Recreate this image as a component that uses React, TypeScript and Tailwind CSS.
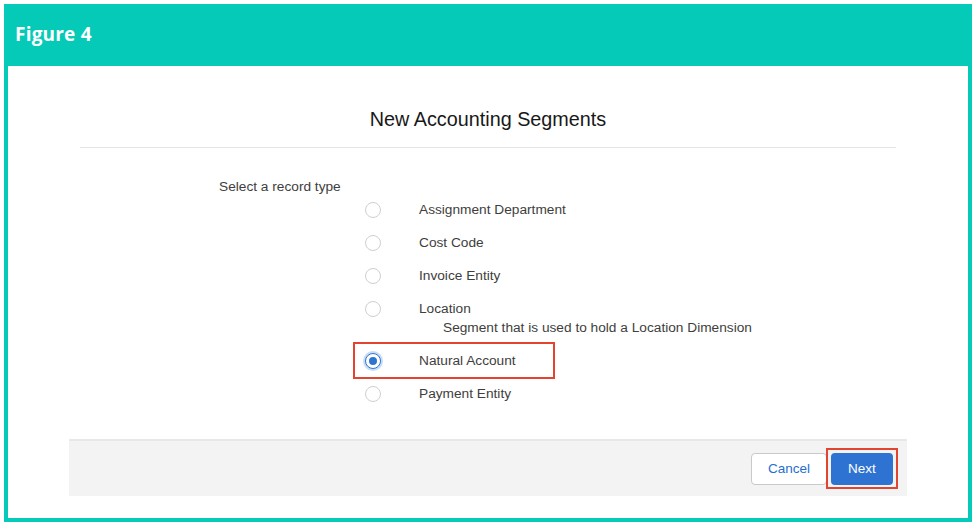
import React from "react";

const options = [
  { label: "Assignment Department" },
  { label: "Cost Code" },
  { label: "Invoice Entity" },
  { label: "Location", desc: "Segment that is used to hold a Location Dimension" },
  { label: "Natural Account", selected: true },
  { label: "Payment Entity" },
];

const sans = { fontFamily: '"Liberation Sans", Arial, sans-serif' };

export default function App() {
  return (
    <div className="w-[976px] h-[526px] bg-white p-[4px]">
      <div className="w-[968px] h-[518px] bg-[#04cab7] flex flex-col">
        <div className="h-[62px] flex items-center pl-[11px] pb-[2px]">
          <span
            className="text-white text-[19px] font-bold tracking-[0.2px]"
            style={{ fontFamily: '"Open Sans", sans-serif' }}
          >
            Figure 4
          </span>
        </div>
        <div className="flex-1 mx-[4px] mb-[4px] bg-white flex flex-col" style={sans}>
          <div className="pt-[41px] text-center text-[19.8px] leading-[24px] text-[#181818]">
            New Accounting Segments
          </div>
          <div className="mt-[16px] mx-[72px] h-px bg-[#e5e5e5]" />
          <div className="ml-[211px] mt-[30px] text-[13.7px] leading-[18px] text-[#3e3e3c]">
            <div>Select a record type</div>
            <div className="ml-[146px] mt-[5px] flex flex-col gap-[15px]">
              {options.map((o) => (
                <div key={o.label} className="flex flex-col">
                  <div className="relative flex items-center h-[18px]">
                    {o.selected ? (
                      <span className="w-[16px] h-[16px] rounded-full border border-[#2e73d1] bg-white flex items-center justify-center shadow-[0_0_0_2px_#c6dcf7]">
                        <span className="w-[8px] h-[8px] rounded-full bg-[#2e73d1]" />
                      </span>
                    ) : (
                      <span className="w-[16px] h-[16px] rounded-full border border-[#cfcfcf] bg-white" />
                    )}
                    <span className="ml-[38px]">{o.label}</span>
                    {o.selected && (
                      <span className="absolute left-[-12px] top-[-10px] w-[202px] h-[37px] border-2 border-[#e3442f]" />
                    )}
                  </div>
                  {o.desc && <div className="ml-[78px] mt-[1px]">{o.desc}</div>}
                </div>
              ))}
            </div>
          </div>
          <div className="mt-[36px] mx-[61px] h-[57px] bg-[#f3f3f3] border-t-2 border-[#e8e8e8] flex items-start justify-end pt-[12px] pr-[14px] gap-[4px]">
            <button className="w-[76px] h-[32px] rounded-[4px] border border-[#c9c9c9] bg-white text-[13.5px] text-[#1f6fd0]">
              Cancel
            </button>
            <div className="relative">
              <button className="w-[62px] h-[32px] rounded-[4px] bg-[#2e73d1] text-[13.5px] text-white">
                Next
              </button>
              <span className="absolute left-[-5px] top-[-5px] w-[72px] h-[41px] border-2 border-[#e3442f]" />
            </div>
          </div>
        </div>
      </div>
    </div>
  );
}
